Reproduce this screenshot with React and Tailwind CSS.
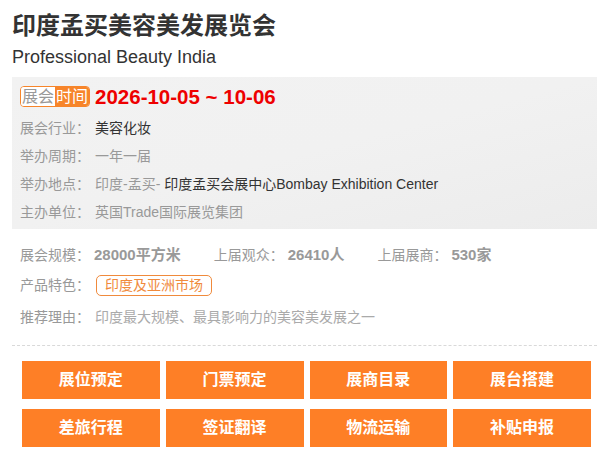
import React from 'react';

const font = { fontFamily: '"Liberation Sans", "Noto Sans CJK SC", sans-serif' };

const infoRows = [
  { label: '展会行业：', value: <span className="text-[#333]">美容化妆</span> },
  { label: '举办周期：', value: <span className="text-[#999]">一年一届</span> },
  {
    label: '举办地点：',
    value: (
      <>
        <span className="text-[#999]">印度-孟买- </span>
        <span className="text-[#333]">印度孟买会展中心Bombay Exhibition Center</span>
      </>
    ),
  },
  { label: '主办单位：', value: <span className="text-[#999]">英国Trade国际展览集团</span> },
];

const buttons = ['展位预定', '门票预定', '展商目录', '展台搭建', '差旅行程', '签证翻译', '物流运输', '补贴申报'];

function Stat({ label, value, last }) {
  return (
    <div className={`flex items-center ${last ? '' : 'mr-[33px]'}`}>
      <span className="text-[#999]">{label}</span>
      <span className="ml-[4px] text-[15px] font-bold text-[#999]">{value}</span>
    </div>
  );
}

export default function App() {
  return (
    <div className="w-[605px] h-[462px] bg-white overflow-hidden" style={font}>
      <div className="ml-[12px] w-[585px] pt-[10px]">
        <h1 className="text-[24px] leading-[32px] font-bold text-[#333]">印度孟买美容美发展览会</h1>
        <p className="mt-[3px] text-[18px] leading-[24px] text-[#333]">Professional Beauty India</p>

        <div className="mt-[8px] h-[152px] bg-[#f0f0f0] bg-gradient-to-br from-[#f2f2f2] via-[#f1f1f1] to-[#ececec] pl-[8px] pt-[9px]">
          <div className="flex items-center h-[21px]">
            <div className="flex h-[21px] rounded-[4px] border border-[#f7852a] overflow-hidden text-[16px] leading-[19px]">
              <span className="bg-white text-[#999] px-[1px]">展会</span>
              <span className="bg-[#f7852a] text-white px-[1px]">时间</span>
            </div>
            <span className="ml-[5px] text-[20.5px] font-bold text-[#ee0000] leading-[21px]">2026-10-05 ~ 10-06</span>
          </div>
          <div className="mt-[7px]">
            {infoRows.map((r) => (
              <div key={r.label} className="flex items-center h-[28px] text-[14px]">
                <span className="text-[#999] w-[75px]">{r.label}</span>
                <span>{r.value}</span>
              </div>
            ))}
          </div>
        </div>

        <div className="pl-[8px] mt-[12px] text-[14px]">
          <div className="flex items-center h-[28px]">
            <Stat label="展会规模：" value="28000平方米" />
            <Stat label="上届观众：" value="26410人" />
            <Stat label="上届展商：" value="530家" last />
          </div>
          <div className="flex items-center h-[30px] mt-[1px]">
            <span className="text-[#999] w-[76px]">产品特色：</span>
            <span className="h-[21px] px-[8px] rounded-[5px] border border-[#f08a3c] text-[#f08a3c] leading-[19px]">印度及亚洲市场</span>
          </div>
          <div className="flex items-center h-[28px] mt-[3px]">
            <span className="text-[#999] w-[75px]">推荐理由：</span>
            <span className="text-[#aaa]">印度最大规模、最具影响力的美容美发展之一</span>
          </div>
        </div>

        <div className="mt-[14px] border-t border-dashed border-[#d9d9d9]" />

        <div className="mt-[15px] pl-[10px] pr-[6px] grid grid-cols-4 gap-x-[6px] gap-y-[10px]">
          {buttons.map((b) => (
            <div key={b} className="h-[38px] bg-[#fe7f26] flex items-center justify-center text-white text-[16px] font-bold">
              {b}
            </div>
          ))}
        </div>
      </div>
    </div>
  );
}
